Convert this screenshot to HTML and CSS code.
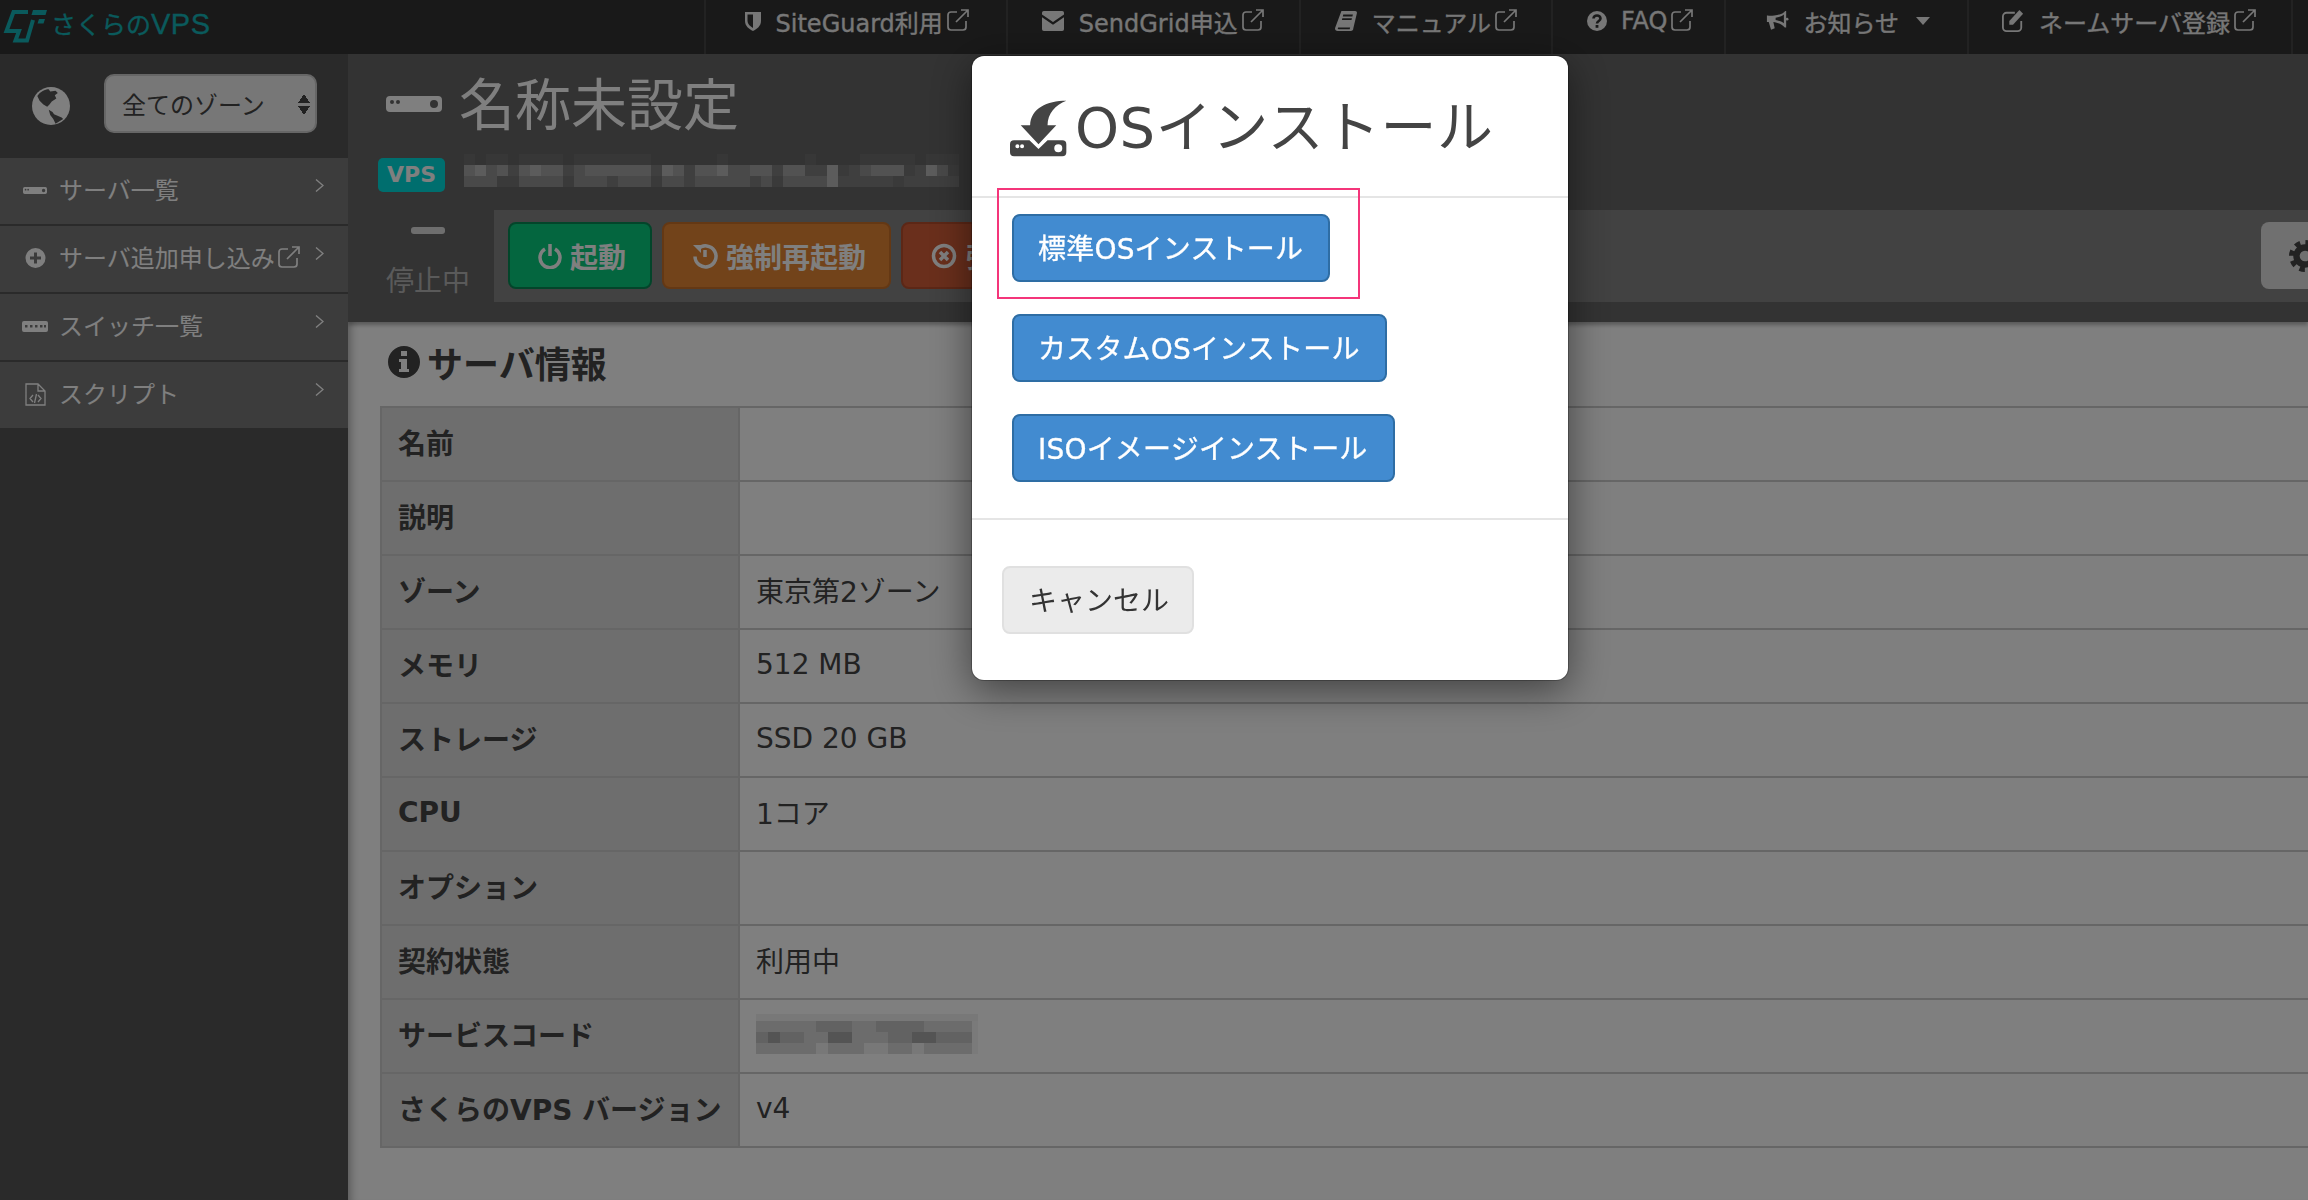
FILE: index.html
```html
<!DOCTYPE html>
<html lang="ja">
<head>
<meta charset="utf-8">
<title>さくらのVPS</title>
<link rel="stylesheet" href="styles.css">
</head>
<body>
<svg class="defs" aria-hidden="true">
  <symbol id="ext" viewBox="0 0 24 24"><path fill="none" stroke="currentColor" stroke-width="1.7" d="M11 4H5a3 3 0 0 0-3 3v12a3 3 0 0 0 3 3h12a3 3 0 0 0 3-3v-6M10 14 22 2M15 2h7v7"/></symbol>
  <symbol id="chev" viewBox="0 0 9 13"><path fill="none" stroke="currentColor" stroke-width="1.4" d="M1 .5 8 6.500 1 12.500"/></symbol>
  <symbol id="srv" viewBox="0 0 56 16"><path fill="currentColor" fill-rule="evenodd" d="M4 0h48a4 4 0 0 1 4 4v8a4 4 0 0 1-4 4H4a4 4 0 0 1-4-4V4a4 4 0 0 1 4-4zM6 4a2 2 0 1 0 0 4 2 2 0 0 0 0-4zM12 4a2 2 0 1 0 0 4 2 2 0 0 0 0-4zM48 4a4 4 0 1 0 0 8 4 4 0 0 0 0-8z"/></symbol>
</svg>

<header class="topbar">
  <a class="logo">
    <svg class="logo-mark" viewBox="0 0 50 44"><path fill="none" stroke="currentColor" stroke-width="4" d="M28 12H13.500L6.500 31H19L15.500 40.500H27L33 20"/><path fill="currentColor" d="M33 10h14l-1.500 5H31.500zM39 19h6l-1.500 4.500h-6z"/></svg>
    <span class="logo-text">さくらの<span class="logo-vps">VPS</span></span>
  </a>
  <nav class="nav">
    <a class="nav-item"><svg class="ni ni-shield" viewBox="0 0 18 20"><path fill="currentColor" fill-rule="evenodd" d="M1 1h16v9c0 5-4 8-8 10-4-2-8-5-8-10zM9 3.500H3.500V10c0 3 2.500 5 5.500 7z"/></svg><span>SiteGuard利用</span><svg class="ext"><use href="#ext"/></svg></a>
    <a class="nav-item"><svg class="ni ni-mail" viewBox="0 0 24 24"><path fill="currentColor" d="M2 1h20a2 2 0 0 1 2 2v2L12 13 0 5V3a2 2 0 0 1 2-2zM0 8l12 8 12-8v13a2 2 0 0 1-2 2H2a2 2 0 0 1-2-2z"/></svg><span>SendGrid申込</span><svg class="ext"><use href="#ext"/></svg></a>
    <a class="nav-item"><svg class="ni ni-mail" viewBox="0 0 24 24"><path fill="currentColor" fill-rule="evenodd" d="M7 1h15a2 2 0 0 1 2 2L20 20a3 3 0 0 1-3 3H3a3 3 0 0 1-3-3zM9 5 8.500 7H19l.5-2zM8 9l-.5 2H18l.5-2zM3 20c0 1 1 1 1 1h12l.5-2H4s-1 0-1 1z"/></svg><span>マニュアル</span><svg class="ext"><use href="#ext"/></svg></a>
    <a class="nav-item"><svg class="ni ni-q" viewBox="0 0 20 20"><circle cx="10" cy="10" r="10" fill="currentColor"/><path fill="none" stroke="#333" stroke-width="2.600" d="M6.500 7.500C6.500 5.500 8 4.500 10 4.500s3.500 1 3.500 3c0 2.500-3.500 2.500-3.500 5"/><path fill="#333" d="M8.600 14h2.800v2.800H8.600z"/></svg><span>FAQ</span><svg class="ext"><use href="#ext"/></svg></a>
    <a class="nav-item"><svg class="ni ni-mail" viewBox="0 0 24 24"><path fill="currentColor" fill-rule="evenodd" d="M22 1v18h-1.500C17 15 12 13.500 8 13l1.500 7-4 1.500L3 13H1V6c0 0 3 .5 8 0 5-.5 10-2 12-5zM19.500 5C17 7.500 13 8 10.500 8.500v2.500c3 .5 6.500 1.500 9 3.500z"/><circle cx="23" cy="10" r="1.500" fill="currentColor"/></svg><span>お知らせ</span><i class="caret"></i></a>
    <a class="nav-item"><svg class="ni ni-mail" viewBox="0 0 24 24"><path fill="none" stroke="currentColor" stroke-width="2" d="M14 3H5a4 4 0 0 0-4 4v12a4 4 0 0 0 4 4h12a4 4 0 0 0 4-4v-7"/><path fill="currentColor" d="M19 0l4 4L12 16H8v-4z"/></svg><span>ネームサーバ登録</span><svg class="ext"><use href="#ext"/></svg></a>
  </nav>
</header>

<div class="layout">
  <aside class="sidebar">
    <div class="zone">
      <svg class="globe" viewBox="0 0 100 100"><circle cx="50" cy="50" r="50" fill="#fff"/><path fill="#555" d="M14 24C22 12 34 6 44 6l4 6 14-2 6 6-8 6 4 8-12 8-6 8-6 6-10-6-10-10zM44 60l10 6 4 6 20 8 4 4-20 13-6-13-8-10z"/></svg>
      <div class="select">全てのゾーン<i class="sel-arrows"></i></div>
    </div>
    <ul class="menu">
      <li class="menu-item"><span class="mi"><svg class="mi-srv"><use href="#srv"/></svg></span><span>サーバ一覧</span><svg class="chev"><use href="#chev"/></svg></li>
      <li class="menu-item"><span class="mi"><svg class="mi-plus" viewBox="0 0 20 20"><path fill="currentColor" fill-rule="evenodd" d="M10 0a10 10 0 1 1 0 20 10 10 0 0 1 0-20zM8.500 4.500v4h-4v3h4v4h3v-4h4v-3h-4v-4z"/></svg></span><span>サーバ追加申し込み</span><svg class="ext"><use href="#ext"/></svg><svg class="chev"><use href="#chev"/></svg></li>
      <li class="menu-item"><span class="mi"><svg class="mi-sw" viewBox="0 0 26 11"><path fill="currentColor" fill-rule="evenodd" d="M2 0h22a2 2 0 0 1 2 2v7a2 2 0 0 1-2 2H2a2 2 0 0 1-2-2V2a2 2 0 0 1 2-2zM3 4v2.500h2.500V4zM8 4v2.500h2.500V4zM13 4v2.500h2.500V4zM18 4v2.500h2.500V4zM22 4v2.500h2V4z"/></svg></span><span>スイッチ一覧</span><svg class="chev"><use href="#chev"/></svg></li>
      <li class="menu-item"><span class="mi"><svg class="mi-doc" viewBox="0 0 21 23"><path fill="none" stroke="currentColor" stroke-width="1.300" d="M1 1h12l7 7v14H1zM13 1v7h7M8 12l-3 3.500L8 19M13 12l3 3.500-3 3.500M11.500 11l-2 9"/></svg></span><span>スクリプト</span><svg class="chev"><use href="#chev"/></svg></li>
    </ul>
  </aside>

  <main class="content">
    <section class="head">
      <div class="title-row">
        <svg class="title-icon"><use href="#srv"/></svg>
        <h1 class="title">名称未設定</h1>
      </div>
      <div class="sub-row">
        <span class="badge">VPS</span>
        <svg class="mosaic mosaic-a" viewBox="0 0 507 33" shape-rendering="crispEdges">
          <path fill="#6e6e6e" d="M0 0h11v11H0zM22 0h22v11H22zM55 0h44v11H55zM110 0h77v11h-77zM253 0h11v11h-11zM341 0h11v11h-11zM396 0h55v11h-55zM462 0h33v11h-33z"/>
          <path fill="#747474" d="M0 11h495v22H0z"/>
          <path fill="#7e7e7e" d="M341 11h22v11h-22zM385 11h11v11h-11zM451 11h11v11h-11zM374 22h55v11h-55zM440 22h55v11h-55zM44 11h11v11H44zM99 11h11v11H99zM187 11h11v11h-11zM220 11h11v11h-11zM308 11h11v11h-11zM143 22h11v11h-11zM220 22h11v11h-11zM286 22h11v11h-11z"/>
          <path fill="#929292" d="M0 22h33v11H0zM55 22h44v11H55zM110 22h33v11h-33zM154 22h33v11h-33zM198 22h22v11h-22zM231 22h55v11h-55zM297 22h11v11h-11zM319 22h33v11h-33zM352 22h11v11h-11zM22 11h11v11H22zM110 11h11v11h-11zM264 11h22v11h-22zM396 11h11v11h-11zM473 11h11v11h-11z"/>
          <path fill="#a4a4a4" d="M0 11h11v11H0zM33 11h11v11H33zM55 11h11v11H55zM77 11h22v11H77zM121 11h66v11h-66zM209 11h11v11h-11zM231 11h22v11h-22zM286 11h22v11h-22zM319 11h22v11h-22zM407 11h33v11h-33z"/>
          <path fill="#b8b8b8" d="M11 11h11v11H11zM66 11h11v11H66zM198 11h11v11h-11zM253 11h11v11h-11zM363 11h11v22h-11zM462 11h11v11h-11z"/>
        </svg>
      </div>
      <div class="action-row">
        <div class="status"><i class="status-bar"></i><span>停止中</span></div>
        <div class="toolbar">
          <a class="btn btn-start"><svg class="bi" viewBox="0 0 24 26"><path fill="none" stroke="currentColor" stroke-width="3.500" d="M7 6a10 10 0 1 0 10 0M12 1v12"/></svg>起動</a>
          <a class="btn btn-restart"><svg class="bi" viewBox="0 0 26 26"><path fill="none" stroke="currentColor" stroke-width="3.500" d="M6 6a10.500 10.500 0 1 1-3 7.500M13 7v7"/><path fill="currentColor" d="M1 2h8v8z"/></svg>強制再起動</a>
          <a class="btn btn-stop"><svg class="bi" viewBox="0 0 26 26"><circle cx="13" cy="13" r="10.500" fill="none" stroke="currentColor" stroke-width="3.500"/><path fill="none" stroke="currentColor" stroke-width="3.500" d="M9 9l8 8M17 9l-8 8"/></svg>強制停止</a>
          <a class="btn-settings"><svg class="gear" viewBox="0 0 30 30"><circle cx="15" cy="15" r="8" fill="none" stroke="currentColor" stroke-width="6"/><circle cx="15" cy="15" r="12.500" fill="none" stroke="currentColor" stroke-width="5" stroke-dasharray="5 4.820"/></svg></a>
        </div>
      </div>
    </section>

    <section class="info">
      <h2 class="info-title"><svg class="info-icon" viewBox="0 0 32 32"><path fill="currentColor" fill-rule="evenodd" d="M16 0a16 16 0 1 1 0 32 16 16 0 0 1 0-32zM13 5v5h6V5zM11 13v3h2v7h-2v3h10v-3h-2V13z"/></svg>サーバ情報</h2>
      <table class="table">
        <tr><th>名前</th><td></td></tr>
        <tr><th>説明</th><td></td></tr>
        <tr><th>ゾーン</th><td>東京第2ゾーン</td></tr>
        <tr><th>メモリ</th><td>512 MB</td></tr>
        <tr><th>ストレージ</th><td>SSD 20 GB</td></tr>
        <tr><th>CPU</th><td>1コア</td></tr>
        <tr><th>オプション</th><td></td></tr>
        <tr><th>契約状態</th><td>利用中</td></tr>
        <tr><th>サービスコード</th><td><svg class="mosaic mosaic-b" viewBox="0 0 222 40" shape-rendering="crispEdges">
          <path fill="#f4f4f4" d="M0 0h222v40H0z"/>
          <path fill="#d8d8d8" d="M0 7h216v33H0z"/>
          <path fill="#c4c4c4" d="M0 18h48v11H0zM60 7h36v11H60zM120 7h48v11h-48zM180 18h36v11h-36zM72 18h24v11H72zM132 18h36v11h-36z"/>
          <path fill="#a8a8a8" d="M72 18h12v11H72zM12 18h12v11H12zM156 18h24v11h-24zM84 18h12v11H84z"/>
          <path fill="#f0f0f0" d="M60 29h12v11H60zM108 29h24v11h-24zM156 29h12v11h-12zM0 0h222v7H0z"/>
        </svg></td></tr>
        <tr><th>さくらのVPS バージョン</th><td>v4</td></tr>
      </table>
    </section>
  </main>
</div>

<div class="backdrop"></div>

<div class="modal">
  <div class="modal-head">
    <svg class="modal-icon" viewBox="60 90 170 170"><path fill="currentColor" d="M228 92C170 92 122 115 120 165H92l53 57 53-57h-26c0-35 23-60 56-73z"/><path fill="currentColor" fill-rule="evenodd" d="M72 210h46l27 26 27-26h44a12 12 0 0 1 12 12v24a12 12 0 0 1-12 12H72a12 12 0 0 1-12-12v-24a12 12 0 0 1 12-12zM82 222a6 6 0 1 0 0 12 6 6 0 0 0 0-12zM96 222a6 6 0 1 0 0 12 6 6 0 0 0 0-12zM204 222a12 12 0 1 0 0 24 12 12 0 0 0 0-24z"/></svg>
    <h3 class="modal-title">OSインストール</h3>
  </div>
  <div class="modal-body">
    <a class="mbtn">標準OSインストール</a>
    <a class="mbtn">カスタムOSインストール</a>
    <a class="mbtn">ISOイメージインストール</a>
  </div>
  <div class="modal-foot">
    <a class="cancel">キャンセル</a>
  </div>
  <div class="highlight"></div>
</div>
</body>
</html>
```
FILE: styles.css
```css
* { box-sizing: border-box; }
html, body { margin: 0; height: 1200px; overflow: hidden; }
body {
  font-family: "DejaVu Sans", "Noto Sans CJK JP", sans-serif;
  font-size: 28px;
  color: #444;
  background: #555;
  display: flex;
  flex-direction: column;
}
.defs { position: absolute; width: 0; height: 0; }
h1, h2, h3, ul { margin: 0; padding: 0; }
ul { list-style: none; }

/* top bar */
.topbar {
  height: 54px;
  flex: none;
  background: #333;
  display: flex;
  justify-content: space-between;
  color: #eee;
}
.logo { display: flex; align-items: flex-start; color: #14b4b8; }
.logo-mark { width: 50px; height: 44px; }
.logo-text {
  font-family: "Liberation Sans", "Noto Sans CJK JP", sans-serif;
  font-size: 25px;
  line-height: 48px;
  margin-left: 1px;
  -webkit-text-stroke: .3px currentColor;
}
.logo-vps { font-size: 29px; letter-spacing: .5px; }
.nav { display: flex; padding-right: 15px; }
.nav-item {
  display: flex;
  align-items: center;
  height: 54px;
  padding: 0 34px 12px 33px;
  font-size: 24px;
  border-left: 2px solid #444;
  -webkit-text-stroke: .3px currentColor;
}
.nav-item:last-child { border-right: 2px solid #444; padding-left: 32px; }
.nav-item:nth-child(1) { padding-left: 38px; padding-right: 36px; }
.nav-item:nth-child(2) { padding-right: 34px; }
.nav-item:nth-child(3) { padding-right: 33px; }
.nav-item:nth-child(4) { padding-left: 34px; padding-right: 30px; }
.nav-item:nth-child(5) { padding-left: 39px; padding-right: 37px; }
.ni { flex: none; margin-right: 14px; }
.ni-shield { width: 18px; height: 20px; }
.ni-mail { width: 24px; height: 22px; }
.ni-q { width: 20px; height: 20px; }
.ext { width: 24px; height: 24px; flex: none; margin-left: 3px; margin-top: -2px; }
.caret {
  margin-left: 17px;
  border: 7px solid transparent;
  border-top: 8px solid currentColor;
  border-bottom: 0;
}

/* layout */
.layout { flex: 1; display: flex; min-height: 0; }
.sidebar { width: 348px; flex: none; color: #fff; }
.zone {
  height: 104px;
  padding: 20px 0 0 32px;
  display: flex;
  align-items: flex-start;
  gap: 34px;
}
.globe { width: 38px; height: 38px; margin-top: 13px; flex: none; }
.select {
  width: 213px;
  height: 59px;
  background: #eee;
  border: 2px solid #ccc;
  border-radius: 10px;
  color: #444;
  font-size: 24px;
  display: flex;
  align-items: center;
  padding-left: 16px;
  position: relative;
}
.sel-arrows {
  position: absolute;
  right: 5px;
  top: 18px;
  width: 12px;
  height: 21px;
  background:
    linear-gradient(to bottom right, transparent 50%, #444 51%) 0 0 / 6px 9px no-repeat,
    linear-gradient(to bottom left, transparent 50%, #444 51%) 6px 0 / 6px 9px no-repeat,
    linear-gradient(to top right, transparent 50%, #444 51%) 0 12px / 6px 9px no-repeat,
    linear-gradient(to top left, transparent 50%, #444 51%) 6px 12px / 6px 9px no-repeat;
}
.menu-item {
  height: 68px;
  background: #787878;
  border-bottom: 2px solid #555;
  display: flex;
  align-items: center;
  padding: 0 24px 6px 22px;
  font-size: 24px;
  color: #fff;
}
.mi { width: 26px; margin-right: 11px; display: flex; justify-content: center; flex: none; padding-top: 4px; }
.mi-srv { width: 24px; height: 7px; }
.mi-plus { width: 21px; height: 20px; }
.mi-sw { width: 26px; height: 11px; }
.mi-doc { width: 21px; height: 23px; }
.chev { width: 9px; height: 13px; margin-left: auto; margin-top: -6px; flex: none; }
.menu-item .ext { margin-left: 2px; margin-top: 2px; }

/* content */
.content { flex: 1; min-width: 0; background: #fff; overflow: hidden; box-shadow: inset 10px 0 10px -8px rgba(0,0,0,.35); }
.head { height: 268px; background: #666; padding: 10px 0 0 30px; color: #fff; box-shadow: 0 3px 4px rgba(0,0,0,.3); position: relative; }
.title-row { display: flex; align-items: center; height: 80px; }
.title-icon { width: 56px; height: 16px; margin-left: 8px; color: #fff; flex: none; }
.title { font-size: 56px; font-weight: 400; line-height: 78px; margin-left: 17px; padding-top: 3px; height: 80px; }
.sub-row { display: flex; align-items: flex-start; height: 38px; margin-top: 10px; }
.badge {
  margin-top: 4px;
  width: 67px;
  height: 34px;
  background: #00dddd;
  border-radius: 5px;
  font-size: 22px;
  font-weight: 700;
  line-height: 34px;
  text-align: center;
}
.mosaic { display: block; }
.mosaic-a { width: 507px; height: 33px; margin-left: 19px; flex: none; }
.mosaic-b { width: 222px; height: 40px; }
.action-row { display: flex; margin-top: 18px; height: 92px; }
.status { width: 116px; flex: none; display: flex; flex-direction: column; align-items: center; padding-right: 16px; color: #b4b4b4; }
.status-bar { width: 34px; height: 9px; margin-top: 17px; background: #ddd; border-radius: 3px; }
.status span { font-size: 28px; line-height: 40px; margin-top: 28px; }
.toolbar { flex: 1; background: #848484; display: flex; align-items: flex-start; gap: 10px; padding: 12px 0 0 14px; position: relative; }
.btn {
  height: 67px;
  display: inline-flex;
  align-items: center;
  padding: 0 24px 0 28px;
  border-radius: 8px;
  border: 2px solid;
  color: #fff;
  font-size: 28px;
  font-weight: 700;
  white-space: nowrap;
}
.bi { width: 24px; height: 26px; margin-right: 8px; flex: none; }
.btn-start { background: #08cc7e; border-color: #068a55; }
.btn-restart { background: #e48634; border-color: #c87028; padding-right: 23px; }
.btn-restart .bi { width: 26px; }
.btn-stop { background: #d45e38; border-color: #b84e2c; }
.btn-stop .bi { width: 26px; margin-right: 9px; }
.btn-settings {
  position: absolute;
  left: 1767px;
  top: 12px;
  width: 80px;
  height: 67px;
  background: #e0e0e0;
  border-radius: 8px;
  color: #444;
  display: flex;
  align-items: center;
  padding-left: 28px;
}
.gear { width: 32px; height: 32px; }

.info { padding: 18px 0 0 32px; color: #444; }
.info-title { display: flex; align-items: center; height: 50px; padding-bottom: 6px; font-size: 36px; font-weight: 700; margin-bottom: 16px; gap: 7px; }
.info-icon { width: 32px; height: 32px; margin-left: 8px; }
.table { width: 2000px; border-collapse: collapse; table-layout: fixed; font-size: 28px; }
.table th, .table td { height: 74px; padding: 0 16px 4px; border: 2px solid #ccc; text-align: left; }
.table th { width: 358px; background: #dcdcdc; font-weight: 700; white-space: nowrap; }
.table td { background: #fff; font-weight: 400; }

/* overlay */
.backdrop { position: fixed; inset: 0; background: rgba(0,0,0,.5); }

.modal {
  position: fixed;
  left: 972px;
  top: 56px;
  width: 596px;
  height: 624px;
  background: #fff;
  border-radius: 12px;
  box-shadow: 0 0 0 1px rgba(0,0,0,.25), 0 10px 40px rgba(0,0,0,.5);
  display: flex;
  flex-direction: column;
  color: #444;
}
.modal-head { height: 142px; flex: none; display: flex; align-items: flex-start; padding: 44px 0 0 38px; border-bottom: 2px solid #e5e5e5; }
.modal-icon { width: 57px; height: 57px; flex: none; }
.modal-title { font-size: 56px; font-weight: 400; line-height: 56px; margin-left: 8px; white-space: nowrap; letter-spacing: .5px; }
.modal-body { flex: none; height: 320px; padding: 16px 0 0 40px; display: flex; flex-direction: column; align-items: flex-start; gap: 32px; }
.mbtn {
  height: 68px;
  display: inline-flex;
  align-items: center;
  padding: 0 25px 3px 24px;
  background: #428bd0;
  border: 2px solid #2e6da4;
  border-radius: 8px;
  color: #fff;
  font-size: 28px;
  letter-spacing: .2px;
  white-space: nowrap;
  -webkit-text-stroke: .35px currentColor;
}
.modal-foot { border-top: 2px solid #e5e5e5; padding: 46px 0 0 30px; flex: 1; }
.cancel {
  display: inline-flex;
  align-items: center;
  height: 68px;
  padding: 0 23px 3px 25px;
  background: #ebebeb;
  border: 2px solid #e0e0e0;
  border-radius: 8px;
  color: #333;
  font-size: 28px;
  white-space: nowrap;
}
.highlight { position: absolute; left: 25px; top: 132px; width: 363px; height: 111px; border: 2px solid #f4357a; }
```
